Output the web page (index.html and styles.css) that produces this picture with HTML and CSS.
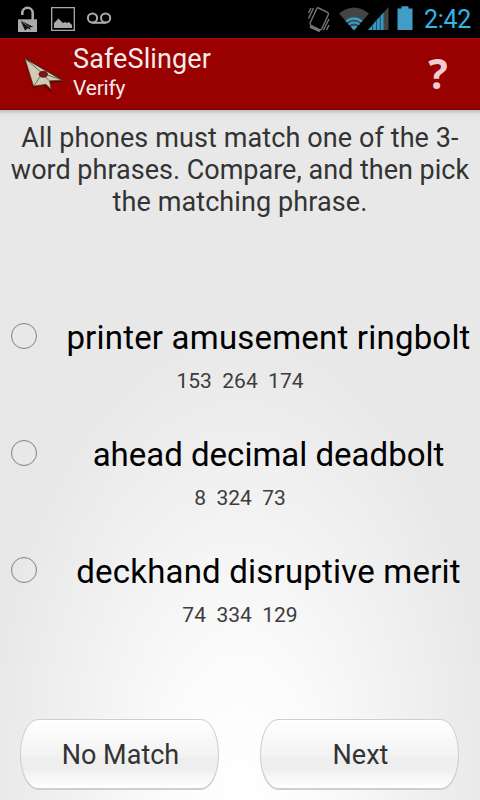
FILE: index.html
```html
<!DOCTYPE html>
<html lang="en">
<head>
<meta charset="utf-8">
<title>SafeSlinger</title>
<link rel="stylesheet" href="styles.css">
</head>
<body>
<div class="status">
  <svg class="notifications" width="130" height="38" viewBox="0 0 130 38">
    <path d="M22.300 15V13a5.200 5.200 0 0 1 10.400 0v7" fill="none" stroke="#aaa" stroke-width="2.600"/>
    <path d="M18 19.300h19v12.700H18z" fill="#aaa"/>
    <path d="M20.500 20.500l13 6.500-4 .3 1.500 2.800-3-1.800-3 2.200z" fill="#111"/>
    <path d="M21 21l8 6" stroke="#aaa" stroke-width=".6"/>
    <path d="M51.700 7.700h22.600v22.600H51.700z" fill="none" stroke="#aaa" stroke-width="1.300"/>
    <path d="M54 28v-5l4.500-4.500 4.500 4.500 2-1 2 1 2-1 3 3v3z" fill="#aaa"/>
    <g fill="none" stroke="#aaa" stroke-width="2"><circle cx="92.500" cy="18" r="4.600"/><circle cx="105.600" cy="18" r="4.600"/><path d="M92 22.800h14"/></g>
  </svg>
  <svg class="system" width="115" height="38" viewBox="305 0 115 38">
    <g fill="none" stroke="#777" stroke-width="1.400">
      <path d="M318.500 8l9 4.300q1.500 1 .8 2.500l-6.500 14q-.8 1.500-2.300.8l-8.500-4.300q-1.500-1-.8-2.500l6.500-14q.6-1.500 1.800-.8z"/>
      <path d="M310 26.500l10 4.500" stroke-width="2.500"/>
      <path d="M308.500 18.500l5-10.500M308.500 13l2.500-5M323.500 30l5.500-11M326.500 30l2.500-5"/>
    </g>
    <path d="M339 13.500Q354 1.500 369 13.500L354 30.300z" fill="#444"/>
    <g fill="none" stroke="#33a0cd"><path d="M346 21.500q8-6 16 0" stroke-width="2.600"/><path d="M348.500 24.500q5.500-4 11 0" stroke-width="2"/></g>
    <path d="M350.500 26.800q3.500-2 7 0L354 30.300z" fill="#33a0cd"/>
    <path d="M368 30L388.500 7v23z" fill="#444"/>
    <path d="M368 30L383.500 12.500V30z" fill="#3398c3"/>
    <path d="M372.500 25v5M376.500 20.500V30M380.300 16V30" stroke="#1a526c" stroke-width="1"/>
    <path d="M397.500 8.500h4V6.300h7v2.200h4V30h-15z" fill="#419dc5"/>
  </svg>
  <span class="clock">2:42</span>
</div>
<header class="bar">
  <svg class="logo" width="56" height="46" viewBox="16 50 56 46">
    <path d="M25 61l8 28 9-4 9 7-1-9 14-1z" fill="#400" opacity=".5"/>
    <path d="M25 58.500L62.500 80.300l-13 .5 1.500 8.500-5-5-12.500 1.700z" fill="#ceccb5"/>
    <path d="M62.500 80.300l-13 .5 1.500 8.500-5-5-12.500 1.700L25 58.500" fill="none" stroke="#4b3a28" stroke-width=".6"/>
    <path d="M25 58.500L62.500 80.300" stroke="#2a2118" stroke-width=".9"/>
    <path d="M25 58.500L42 73M62 80L43 73.500M34 85.500l7-10M49.500 80.800L44 76" fill="none" stroke="#55503f" stroke-width=".8"/>
    <ellipse cx="43.300" cy="74.300" rx="4.700" ry="3.500" fill="#7c191b"/>
    <path d="M40.500 73.500q3-2 5.500.5M41 76h5" fill="none" stroke="#651315" stroke-width=".7"/>
  </svg>
  <div class="titles">
    <div class="title">SafeSlinger</div>
    <div class="subtitle">Verify</div>
  </div>
  <div class="help">?</div>
</header>
<main class="content">
  <p class="message">
    <span class="m1">All phones must match one of the 3-</span><br>
    <span class="m2">word phrases. Compare, and then pick</span><br>
    <span class="m3">the matching phrase.</span>
  </p>
  <div class="choices">
    <div class="choice"><i class="radio"></i><div class="phrase wide">printer amusement ringbolt</div><div class="numbers">153&nbsp; 264&nbsp; 174</div></div>
    <div class="choice"><i class="radio"></i><div class="phrase">ahead decimal deadbolt</div><div class="numbers">8&nbsp; 324&nbsp; 73</div></div>
    <div class="choice"><i class="radio"></i><div class="phrase wide">deckhand disruptive merit</div><div class="numbers">74&nbsp; 334&nbsp; 129</div></div>
  </div>
  <div class="buttons">
    <div class="button">No Match</div>
    <div class="button">Next</div>
  </div>
</main>
</body>
</html>
```
FILE: styles.css
```css
* { box-sizing: border-box; }
body { margin: 0; width: 480px; height: 800px; overflow: hidden; font-family: Roboto, sans-serif; color: #333; background: #e8e8e8; display: flex; flex-direction: column; }
.status { height: 38px; background: #000; display: flex; flex: none; }
.system { margin-left: 175px; }
.clock { margin-left: 4px; color: #33b5e5; font-size: 25px; line-height: 40px; letter-spacing: -.3px; white-space: nowrap; }
.bar { height: 72px; flex: none; background: #990000; border-top: 1px solid #b30505; border-bottom: 2px solid #850000; display: flex; color: #f4eaea; }
.logo { margin: 11px 0 0 16px; }
.titles { width: 340px; padding-left: 1px; }
.title { font-size: 27px; line-height: 32px; padding-top: 4px; letter-spacing: .1px; }
.subtitle { font-size: 21px; line-height: 27px; letter-spacing: -.2px; }
.help { width: 50px; text-align: center; font-family: "Open Sans", "Noto Sans", sans-serif; font-weight: 700; font-size: 41px; line-height: 69px; padding-left: 2px; color: #efcdd0; }
.content { height: 690px; display: flex; flex-direction: column; background: linear-gradient(rgba(0,0,0,.18), rgba(0,0,0,.03) 4px, transparent 12px), radial-gradient(ellipse 255px 470px at 240px 690px, #fff 0, #fbfbfb 30%, #e8e8e8 100%); }
.message { margin: 0; padding-top: 12px; height: 182px; font-size: 27px; line-height: 32px; text-align: center; white-space: nowrap; }
.m1 { letter-spacing: .1px; }
.m3 { letter-spacing: .1px; }
.choice { height: 117px; display: grid; grid-template-columns: 57px 423px; grid-template-rows: 69px 34px; }
.radio { width: 26px; height: 26px; border: 1.5px solid #808080; border-radius: 50%; margin: 31px 0 0 11px; }
.phrase { font-size: 33px; line-height: 40px; padding-top: 26px; text-align: center; color: #000; white-space: nowrap; }
.wide { letter-spacing: .2px; }
.numbers { grid-column: 1 / 3; font-size: 21px; line-height: 24px; text-align: center; padding-top: 8px; color: #3c3c3c; }
.buttons { display: flex; gap: 41px; padding: 76px 20px 0; }
.button { width: 199px; height: 71px; flex: none; border: 1.5px solid #cecece; border-bottom-width: 2px; border-radius: 18px / 35px; background: linear-gradient(#fff, #f3f3f3 50%, #eee 58%, #eee 70%, #fff); text-align: center; font-size: 27px; line-height: 71px; padding-left: 2px; }
```
